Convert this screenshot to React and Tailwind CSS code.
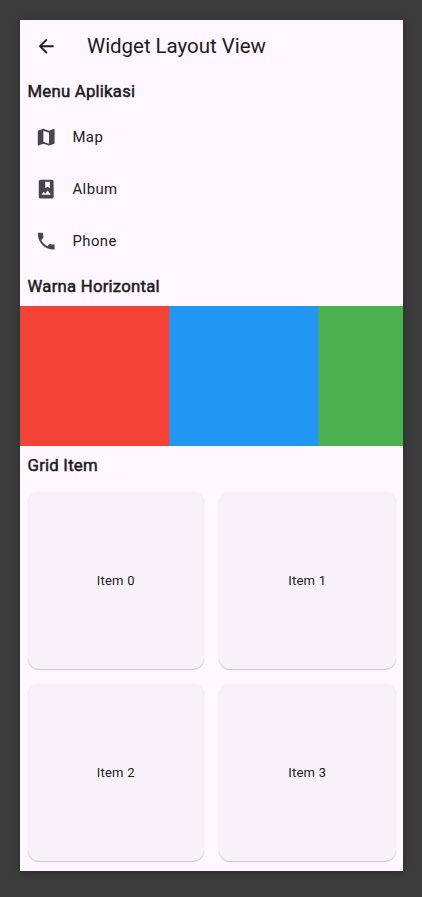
import { MdArrowBack, MdMap, MdPhotoAlbum, MdPhone } from 'react-icons/md';

const menu = [
  { label: 'Map', Icon: MdMap },
  { label: 'Album', Icon: MdPhotoAlbum },
  { label: 'Phone', Icon: MdPhone },
];
const colors = ['bg-[#f44336]', 'bg-[#2196f3]', 'bg-[#4caf50]'];
const items = ['Item 0', 'Item 1', 'Item 2', 'Item 3'];

function Heading({ children }) {
  return (
    <h2 className="flex h-[39px] shrink-0 items-center px-[7.5px] text-[16.76px] leading-none font-normal tracking-[0.22px] [-webkit-text-stroke:0.5px_#1d1b20]">
      {children}
    </h2>
  );
}

export default function App() {
  return (
    <div className="h-[897px] w-[422px] bg-[#3c3c3c] pt-5 pl-5 font-['Roboto',sans-serif] text-[#1d1b20]">
      <main className="flex h-[851px] w-[383px] flex-col overflow-hidden bg-[#fef7ff] shadow-[0_1px_8px_rgba(0,0,0,0.3)]">
        <header className="flex h-[52px] shrink-0 items-center pl-[15px]">
          <MdArrowBack className="size-[22.4px]" />
          <h1 className="ml-[29.6px] text-[20.5px] leading-none tracking-[-0.04px]">Widget Layout View</h1>
        </header>
        <Heading>Menu Aplikasi</Heading>
        <nav className="shrink-0">
          {menu.map(({ label, Icon }) => (
            <div key={label} className="flex h-[52.1px] items-center pl-[15px] text-[14.9px] tracking-[0.45px]">
              <Icon className="mr-[15px] size-[22.4px] text-[#49454f]" />
              {label}
            </div>
          ))}
        </nav>
        <Heading>Warna Horizontal</Heading>
        <div className="flex h-[139.7px] shrink-0 overflow-hidden">
          {colors.map((color) => (
            <div key={color} className={`w-[149px] shrink-0 ${color}`} />
          ))}
        </div>
        <Heading>Grid Item</Heading>
        <div className="grid grid-cols-2 gap-x-[15px] gap-y-[15px] px-[7.5px] pt-[7.4px]">
          {items.map((item) => (
            <div
              key={item}
              className="flex h-[176.7px] items-center justify-center rounded-[11.2px] bg-[#f7f2fa] pt-[0.4px] text-[13.03px] tracking-[0.233px] shadow-[0_1px_1px_rgba(0,0,0,0.2),0_0_1px_rgba(0,0,0,0.06)]"
            >
              {item}
            </div>
          ))}
        </div>
      </main>
    </div>
  );
}
